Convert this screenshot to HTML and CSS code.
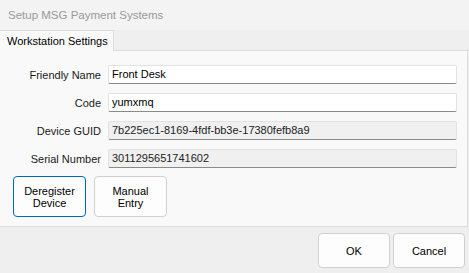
FILE: index.html
```html
<!DOCTYPE html>
<html>
<head>
<meta charset="utf-8">
<link rel="stylesheet" href="styles.css">
</head>
<body>
<div class="window">
  <div class="titlebar">Setup MSG Payment Systems</div>
  <div class="tabs">
    <div class="tab">Workstation Settings</div>
  </div>
  <div class="panel">
    <div class="form">
      <label class="label">Friendly Name</label>
      <div class="field">Front Desk</div>
      <label class="label">Code</label>
      <div class="field">yumxmq</div>
      <label class="label">Device GUID</label>
      <div class="field disabled">7b225ec1-8169-4fdf-bb3e-17380fefb8a9</div>
      <label class="label">Serial Number</label>
      <div class="field disabled">3011295651741602</div>
    </div>
    <div class="actions">
      <button class="btn btn-primary">Deregister<br>Device</button>
      <button class="btn">Manual<br>Entry</button>
    </div>
  </div>
  <div class="footer">
    <button class="btn btn-dialog">OK</button>
    <button class="btn btn-dialog">Cancel</button>
  </div>
</div>
</body>
</html>
```
FILE: styles.css
```css
html, body {
  margin: 0;
  padding: 0;
  background: #f0f0f0;
}
.window {
  width: 469px;
  height: 273px;
  background: #efefef;
  font-family: "Liberation Sans", Arial, sans-serif;
  font-size: 11px;
  color: #1a1a1a;
  overflow: hidden;
}
.titlebar {
  height: 30px;
  line-height: 31px;
  padding-left: 8px;
  color: #999999;
  background: #f3f3f3;
  font-size: 11.5px;
  white-space: nowrap;
}
.tabs {
  height: 20px;
  display: flex;
  align-items: flex-end;
}
.tab {
  height: 20px;
  width: 106px;
  padding-left: 7px;
  line-height: 20px;
  background: #f9f9f9;
  border: 1px solid #dcdcdc;
  border-bottom: none;
  border-left: none;
  color: #000;
  white-space: nowrap;
  position: relative;
  z-index: 1;
  margin-bottom: -1px;
}
.panel {
  height: 177px;
  box-sizing: border-box;
  width: 468px;
  background: #f9f9f9;
  border: 1px solid #dcdcdc;
  border-left: none;
  padding-top: 14px;
}
.form {
  display: grid;
  grid-template-columns: 101px 349px;
  column-gap: 7px;
  row-gap: 9px;
  align-items: center;
}
.label {
  text-align: right;
  color: #1a1a1a;
  white-space: nowrap;
}
.field {
  height: 19px;
  box-sizing: border-box;
  border: 1px solid #e2e2e2;
  border-bottom: 1px solid #8a8a8a;
  background: #fff;
  border-radius: 2px;
  padding-left: 3px;
  line-height: 17px;
  color: #000;
  white-space: nowrap;
}
.field.disabled {
  background: #f0f0f0;
  color: #222;
}
.actions {
  display: flex;
  gap: 8px;
  padding-left: 13px;
  margin-top: 8px;
}
.btn {
  font-family: "Liberation Sans", Arial, sans-serif;
  font-size: 11px;
  line-height: 12px;
  color: #000;
  background: #fdfdfd;
  border: 1px solid #d0d0d0;
  border-radius: 4px;
  width: 73px;
  height: 41px;
  padding: 0;
}
.btn-primary {
  border-color: #0067c0;
}
.footer {
  display: flex;
  justify-content: flex-end;
  gap: 3px;
  padding-right: 4px;
  margin-top: 6px;
}
.btn-dialog {
  width: 72px;
  height: 35px;
}
```
